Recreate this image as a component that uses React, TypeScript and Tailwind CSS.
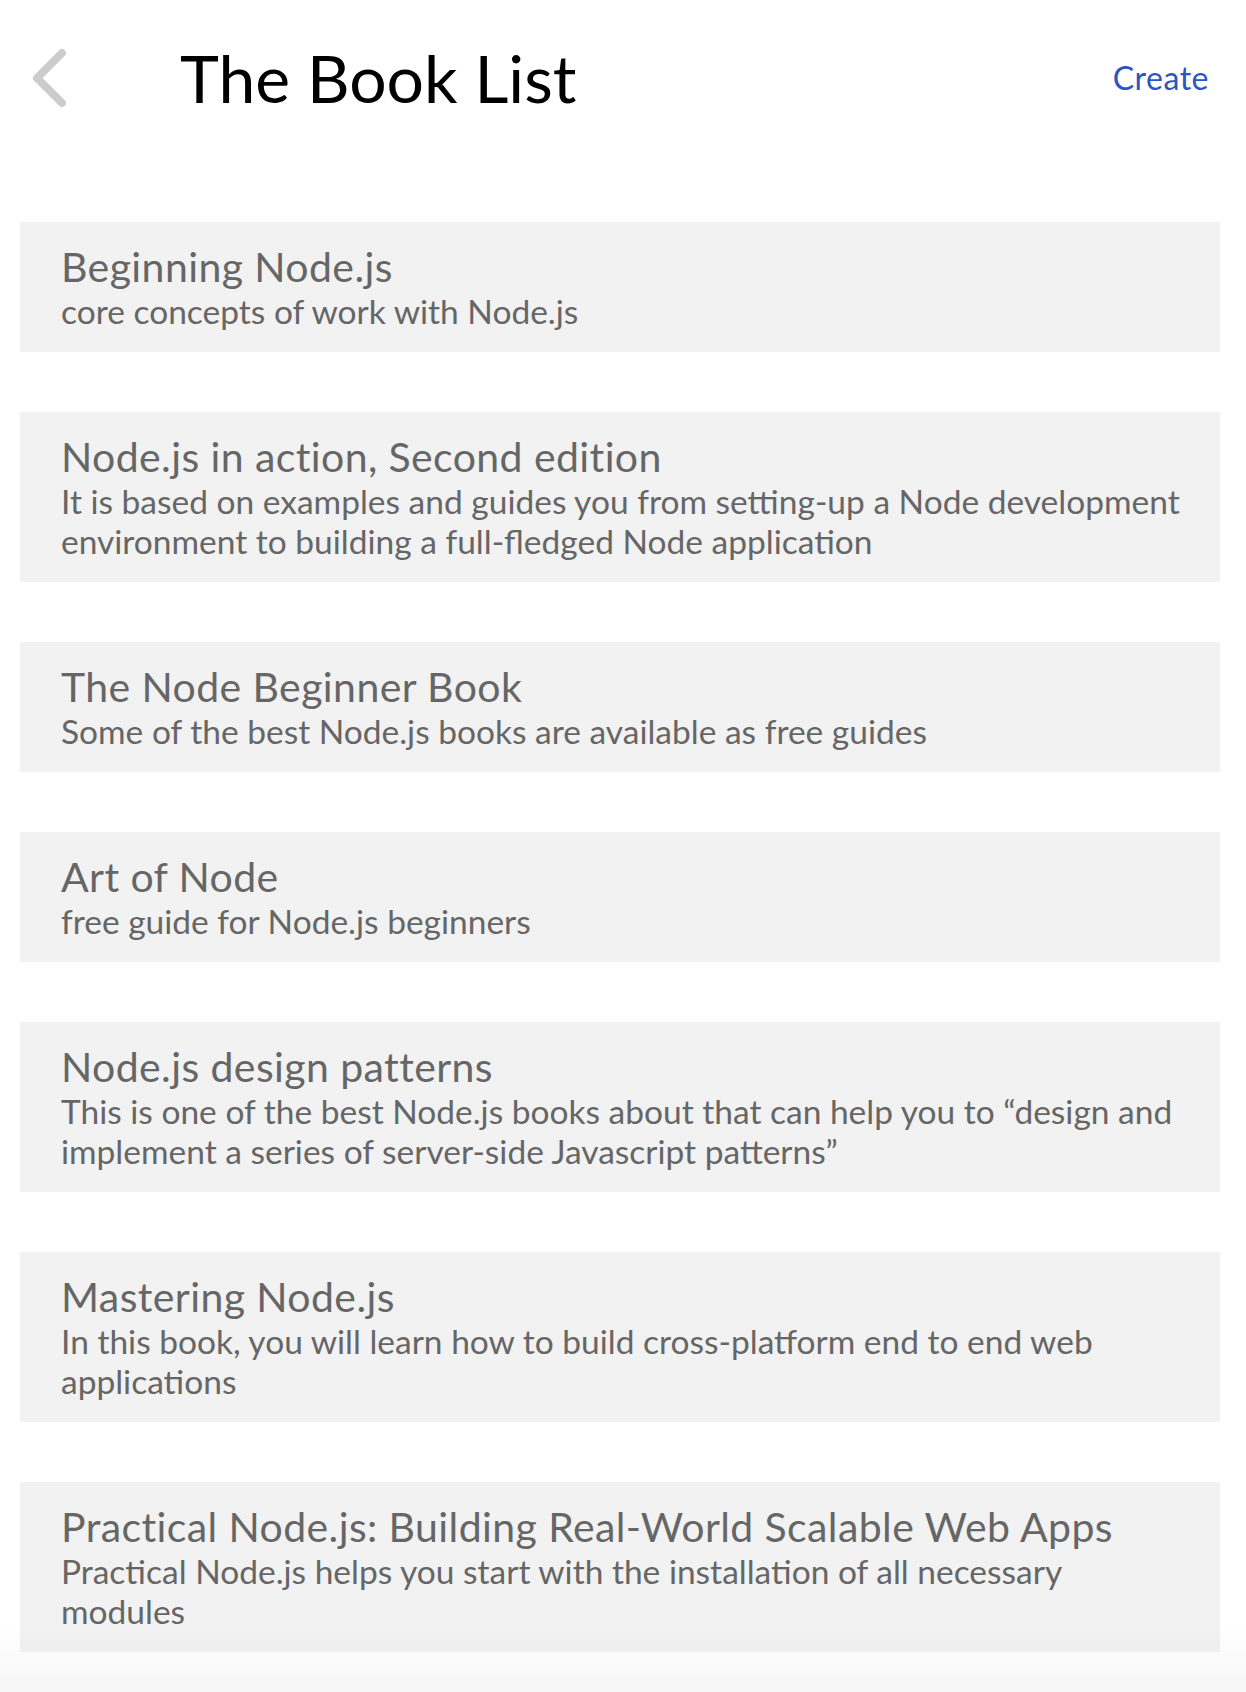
const books = [
  {
    title: "Beginning Node.js",
    description: "core concepts of work with Node.js",
  },
  {
    title: "Node.js in action, Second edition",
    description:
      "It is based on examples and guides you from setting-up a Node development environment to building a full-fledged Node application",
  },
  {
    title: "The Node Beginner Book",
    description: "Some of the best Node.js books are available as free guides",
  },
  {
    title: "Art of Node",
    description: "free guide for Node.js beginners",
  },
  {
    title: "Node.js design patterns",
    description:
      "This is one of the best Node.js books about that can help you to \u201cdesign and implement a series of server-side Javascript patterns\u201d",
  },
  {
    title: "Mastering Node.js",
    description:
      "In this book, you will learn how to build cross-platform end to end web applications",
  },
  {
    title: "Practical Node.js: Building Real-World Scalable Web Apps",
    description:
      "Practical Node.js helps you start with the installation of all necessary modules",
  },
];

function BackChevron() {
  return (
    <svg width="40" height="68" viewBox="0 0 40 68" fill="none">
      <polyline
        points="34,9 9,34 34,59"
        stroke="#cccccc"
        strokeWidth="8"
        strokeLinecap="round"
        strokeLinejoin="round"
      />
    </svg>
  );
}

export default function App() {
  return (
    <main className="relative min-h-[1692px] bg-white font-['Lato',sans-serif]">
      <header className="h-[156px] flex items-center pl-[28px] pr-[37px]">
        <button className="flex items-center">
          <BackChevron />
        </button>
        <h1 className="ml-[112px] text-[66px] leading-none text-black">
          The Book List
        </h1>
        <a href="#" className="ml-auto text-[32px] leading-none tracking-[0.5px] text-[#2d54c3]">
          Create
        </a>
      </header>

      <section className="pt-[66px] ml-[20px] mr-[26px] flex flex-col gap-[60px]">
        {books.map((book) => (
          <div key={book.title} className="bg-[#f2f2f2] pl-[41px] pr-[33px] pt-[23px] pb-[21px]">
            <h2 className="text-[41px] leading-[44px] tracking-[0.4px] text-[#666666]">
              {book.title}
            </h2>
            <p className="mt-[2px] text-[33.5px] leading-[40px] text-[#666666]">
              {book.description}
            </p>
          </div>
        ))}
      </section>

      <div className="absolute left-0 right-0 bottom-0 h-[70px] bg-gradient-to-b from-transparent to-[rgba(0,0,0,0.035)] pointer-events-none" />
    </main>
  );
}
